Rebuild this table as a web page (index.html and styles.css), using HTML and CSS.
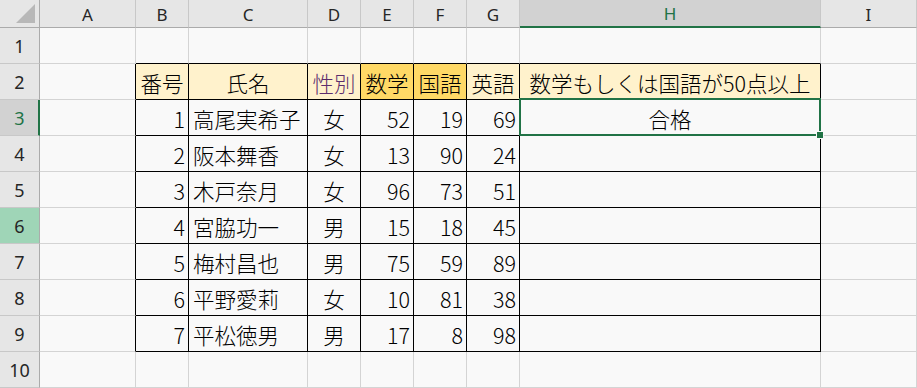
FILE: index.html
```html
<!DOCTYPE html>
<html lang="ja">
<head>
<meta charset="utf-8">
<title>Sheet</title>
<link rel="stylesheet" href="styles.css">
</head>
<body>
<div class="sheet">
  <!-- column headers -->
  <div class="ch corner"><svg width="40" height="28" viewBox="0 0 40 28"><polygon points="35,4 35,23 16,23" fill="#b8b8b8"/></svg></div>
  <div class="ch">A</div>
  <div class="ch">B</div>
  <div class="ch">C</div>
  <div class="ch">D</div>
  <div class="ch">E</div>
  <div class="ch">F</div>
  <div class="ch">G</div>
  <div class="ch ch-sel">H</div>
  <div class="ch">I</div>

  <!-- row 1 -->
  <div class="rh">1</div>
  <div class="c"></div>
  <div class="c top"></div>
  <div class="c top"></div>
  <div class="c top"></div>
  <div class="c top"></div>
  <div class="c top"></div>
  <div class="c top"></div>
  <div class="c top"></div>
  <div class="c"></div>

  <!-- row 2 -->
  <div class="rh">2</div>
  <div class="c lefte"></div>
  <div class="c t hd ctr">番号</div>
  <div class="c t hd ctr">氏名</div>
  <div class="c t hd ctr purple">性別</div>
  <div class="c t hd2 ctr">数学</div>
  <div class="c t hd2 ctr">国語</div>
  <div class="c t hd ctr">英語</div>
  <div class="c t hd ctr">数学もしくは国語が50点以上</div>
  <div class="c"></div>

  <!-- row 3 -->
  <div class="rh rh-sel">3</div>
  <div class="c lefte"></div>
  <div class="c t num">1</div>
  <div class="c t txt">高尾実希子</div>
  <div class="c t ctr">女</div>
  <div class="c t num">52</div>
  <div class="c t num">19</div>
  <div class="c t num">69</div>
  <div class="c t ctr active">合格<span class="handle"></span></div>
  <div class="c"></div>

  <!-- row 4 -->
  <div class="rh">4</div>
  <div class="c lefte"></div>
  <div class="c t num">2</div>
  <div class="c t txt">阪本舞香</div>
  <div class="c t ctr">女</div>
  <div class="c t num">13</div>
  <div class="c t num">90</div>
  <div class="c t num">24</div>
  <div class="c t"></div>
  <div class="c"></div>

  <!-- row 5 -->
  <div class="rh">5</div>
  <div class="c lefte"></div>
  <div class="c t num">3</div>
  <div class="c t txt">木戸奈月</div>
  <div class="c t ctr">女</div>
  <div class="c t num">96</div>
  <div class="c t num">73</div>
  <div class="c t num">51</div>
  <div class="c t"></div>
  <div class="c"></div>

  <!-- row 6 -->
  <div class="rh rh-green">6</div>
  <div class="c lefte"></div>
  <div class="c t num">4</div>
  <div class="c t txt">宮脇功一</div>
  <div class="c t ctr">男</div>
  <div class="c t num">15</div>
  <div class="c t num">18</div>
  <div class="c t num">45</div>
  <div class="c t"></div>
  <div class="c"></div>

  <!-- row 7 -->
  <div class="rh">7</div>
  <div class="c lefte"></div>
  <div class="c t num">5</div>
  <div class="c t txt">梅村昌也</div>
  <div class="c t ctr">男</div>
  <div class="c t num">75</div>
  <div class="c t num">59</div>
  <div class="c t num">89</div>
  <div class="c t"></div>
  <div class="c"></div>

  <!-- row 8 -->
  <div class="rh">8</div>
  <div class="c lefte"></div>
  <div class="c t num">6</div>
  <div class="c t txt">平野愛莉</div>
  <div class="c t ctr">女</div>
  <div class="c t num">10</div>
  <div class="c t num">81</div>
  <div class="c t num">38</div>
  <div class="c t"></div>
  <div class="c"></div>

  <!-- row 9 -->
  <div class="rh">9</div>
  <div class="c lefte"></div>
  <div class="c t num">7</div>
  <div class="c t txt">平松徳男</div>
  <div class="c t ctr">男</div>
  <div class="c t num">17</div>
  <div class="c t num">8</div>
  <div class="c t num">98</div>
  <div class="c t"></div>
  <div class="c"></div>

  <!-- row 10 -->
  <div class="rh">10</div>
  <div class="c"></div>
  <div class="c"></div>
  <div class="c"></div>
  <div class="c"></div>
  <div class="c"></div>
  <div class="c"></div>
  <div class="c"></div>
  <div class="c"></div>
  <div class="c"></div>
</div>
</body>
</html>
```
FILE: styles.css
```css
html, body {
  margin: 0;
  padding: 0;
  background: #f9f9f9;
  overflow: hidden;
}

.sheet {
  display: grid;
  grid-template-columns: 40px 96px 53px 119px 53px 53px 53px 53px 301px 96px;
  grid-template-rows: 28px repeat(10, 36px);
  width: 917px;
  height: 388px;
  font-family: "Noto Sans CJK JP", "Noto Sans", sans-serif;
  color: #000;
}

/* column headers */
.ch {
  box-sizing: border-box;
  background: #e6e6e6;
  border-right: 1px solid #c8c8c8;
  border-bottom: 1px solid #ababab;
  display: flex;
  align-items: center;
  justify-content: center;
  font-family: "Noto Sans", "Open Sans", sans-serif;
  font-size: 17px;
  color: #262626;
  padding-top: 1px;
}
.ch.corner {
  padding: 0;
  border-right-color: #ababab;
  display: block;
}
.ch.corner svg { display: block; }
.ch-sel {
  background: #d2d2d2;
  color: #217346;
  border-bottom: 2px solid #217346;
}

/* row headers */
.rh {
  box-sizing: border-box;
  background: #e6e6e6;
  border-right: 1px solid #ababab;
  border-bottom: 1px solid #c8c8c8;
  display: flex;
  align-items: center;
  justify-content: center;
  font-family: "Noto Sans", "Open Sans", sans-serif;
  font-size: 18px;
  color: #262626;
}
.rh-sel {
  background: #d2d2d2;
  color: #217346;
  border-right: 2px solid #217346;
  padding-left: 1px;
}
.rh-green {
  background: #9fd5b7;
}

/* cells */
.c {
  box-sizing: border-box;
  border-right: 1px solid #d4d4d4;
  border-bottom: 1px solid #d4d4d4;
  font-size: 21.5px;
  font-weight: 300;
  line-height: 1;
  display: flex;
  align-items: center;
  white-space: nowrap;
  padding-top: 2px;
}
.c.top { border-bottom-color: #000; }
.c.lefte { border-right-color: #000; }
.c.t {
  border-right-color: #000;
  border-bottom-color: #000;
}
.hd { background: #fff2cc; }
.hd2 { background: #ffd966; }
.ctr { justify-content: center; }
.num { justify-content: flex-end; padding-right: 3px; }
.txt { padding-left: 4px; }
.purple { color: #5c2e6e; }

.active {
  position: relative;
}
.active::after {
  content: "";
  position: absolute;
  left: -1px;
  top: -2px;
  right: -1px;
  bottom: -1px;
  border: 2px solid #217346;
  pointer-events: none;
}
.handle {
  position: absolute;
  right: -4px;
  bottom: -4px;
  width: 6px;
  height: 6px;
  background: #217346;
  border: 1px solid #f9f9f9;
  z-index: 2;
}
```
